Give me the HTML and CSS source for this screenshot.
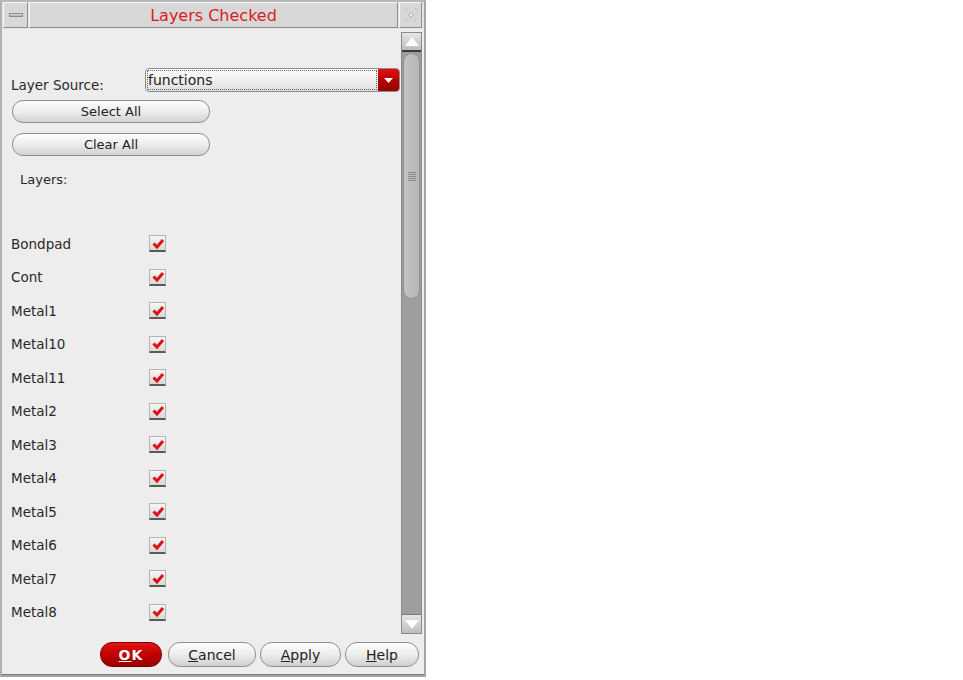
FILE: index.html
```html
<!DOCTYPE html>
<html>
<head>
<meta charset="utf-8">
<link rel="stylesheet" href="styles.css">
</head>
<body>
<div class="window">
  <div class="titlebar">
    <div class="tb-cell tb-min"><span class="min-bar"></span></div>
    <div class="tb-cell tb-title">Layers Checked</div>
    <div class="tb-cell tb-close">
      <svg width="16" height="16" viewBox="0 0 16 16"><path d="M2 2 L14 14 M14 2 L2 14" stroke="#b4b4b4" stroke-width="2.6" stroke-dasharray="3 1.5" fill="none"/><path d="M2 2 L14 14 M14 2 L2 14" stroke="#f4f4f4" stroke-width="1" fill="none"/></svg>
    </div>
  </div>
  <div class="main">
    <div class="pane">
      <div class="source-row">
        <span class="label">Layer Source:</span>
        <div class="combo">
          <div class="combo-field"><span class="combo-text">functions</span></div>
          <div class="combo-btn"><svg width="9" height="5" viewBox="0 0 9 5"><path d="M0 0 H9 L4.5 5 Z" fill="#fff"/></svg></div>
        </div>
      </div>
      <button class="pill first">Select All</button>
      <button class="pill second">Clear All</button>
      <div class="layers-label">Layers:</div>
      <div class="rows">
        <div class="row"><span>Bondpad</span><span class="cb"><svg width="14" height="13" viewBox="0 0 14 13"><path d="M2.5 6.5 L6 10 L12 3" stroke="#e0101a" stroke-width="3" fill="none"/></svg></span></div>
        <div class="row"><span>Cont</span><span class="cb"><svg width="14" height="13" viewBox="0 0 14 13"><path d="M2.5 6.5 L6 10 L12 3" stroke="#e0101a" stroke-width="3" fill="none"/></svg></span></div>
        <div class="row"><span>Metal1</span><span class="cb"><svg width="14" height="13" viewBox="0 0 14 13"><path d="M2.5 6.5 L6 10 L12 3" stroke="#e0101a" stroke-width="3" fill="none"/></svg></span></div>
        <div class="row"><span>Metal10</span><span class="cb"><svg width="14" height="13" viewBox="0 0 14 13"><path d="M2.5 6.5 L6 10 L12 3" stroke="#e0101a" stroke-width="3" fill="none"/></svg></span></div>
        <div class="row"><span>Metal11</span><span class="cb"><svg width="14" height="13" viewBox="0 0 14 13"><path d="M2.5 6.5 L6 10 L12 3" stroke="#e0101a" stroke-width="3" fill="none"/></svg></span></div>
        <div class="row"><span>Metal2</span><span class="cb"><svg width="14" height="13" viewBox="0 0 14 13"><path d="M2.5 6.5 L6 10 L12 3" stroke="#e0101a" stroke-width="3" fill="none"/></svg></span></div>
        <div class="row"><span>Metal3</span><span class="cb"><svg width="14" height="13" viewBox="0 0 14 13"><path d="M2.5 6.5 L6 10 L12 3" stroke="#e0101a" stroke-width="3" fill="none"/></svg></span></div>
        <div class="row"><span>Metal4</span><span class="cb"><svg width="14" height="13" viewBox="0 0 14 13"><path d="M2.5 6.5 L6 10 L12 3" stroke="#e0101a" stroke-width="3" fill="none"/></svg></span></div>
        <div class="row"><span>Metal5</span><span class="cb"><svg width="14" height="13" viewBox="0 0 14 13"><path d="M2.5 6.5 L6 10 L12 3" stroke="#e0101a" stroke-width="3" fill="none"/></svg></span></div>
        <div class="row"><span>Metal6</span><span class="cb"><svg width="14" height="13" viewBox="0 0 14 13"><path d="M2.5 6.5 L6 10 L12 3" stroke="#e0101a" stroke-width="3" fill="none"/></svg></span></div>
        <div class="row"><span>Metal7</span><span class="cb"><svg width="14" height="13" viewBox="0 0 14 13"><path d="M2.5 6.5 L6 10 L12 3" stroke="#e0101a" stroke-width="3" fill="none"/></svg></span></div>
        <div class="row"><span>Metal8</span><span class="cb"><svg width="14" height="13" viewBox="0 0 14 13"><path d="M2.5 6.5 L6 10 L12 3" stroke="#e0101a" stroke-width="3" fill="none"/></svg></span></div>
      </div>
    </div>
    <div class="scrollbar">
      <div class="sb-btn sb-up"><svg width="14" height="9" viewBox="0 0 14 9"><path d="M0 9 L7 0 L14 9 Z" fill="#fdfdfd"/></svg></div>
      <div class="sb-track">
        <div class="sb-thumb"><span class="grip"></span></div>
      </div>
      <div class="sb-btn sb-down"><svg width="14" height="9" viewBox="0 0 14 9"><path d="M0 0 L7 9 L14 0 Z" fill="#fdfdfd"/></svg></div>
    </div>
  </div>
  <div class="footer">
    <button class="fbtn ok"><u>O</u>K</button>
    <button class="fbtn cancel"><u>C</u>ancel</button>
    <button class="fbtn apply"><u>A</u>pply</button>
    <button class="fbtn help"><u>H</u>elp</button>
  </div>
</div>
</body>
</html>
```

FILE: styles.css
```css
* { box-sizing: border-box; }
html, body { margin: 0; padding: 0; background: #ffffff; }
body { font-family: "DejaVu Sans", sans-serif; font-size: 13px; color: #2a2a2a; }

.window {
  width: 426px;
  height: 677px;
  border: 2px solid #a4a4a4;
  border-top-color: #b8b8b8;
  border-left-color: #b0b0b0;
  background: #ededed;
  display: flex;
  flex-direction: column;
}

.titlebar {
  height: 27px;
  display: flex;
  gap: 1px;
  padding: 0 2px 1px 1px;
  background: #e4e4e4;
}
.tb-cell {
  border: 1px solid;
  border-color: #f6f6f6 #8e8e8e #8e8e8e #f6f6f6;
  background: #d8d8d8;
  display: flex;
  align-items: center;
  justify-content: center;
}
.tb-min { width: 25px; }
.min-bar {
  width: 14px;
  height: 4px;
  border: 1px solid #8a8a8a;
  background: linear-gradient(#e8e8e8, #a8a8a8);
}
.tb-title {
  flex: 1;
  color: #da1b1f;
  font-size: 16px;
  padding-top: 1px;
}
.tb-close { width: 23px; }

.main {
  flex: 1;
  display: flex;
  min-height: 0;
}
.pane {
  flex: 1;
  padding: 39px 1px 0 9px;
  overflow: hidden;
}
.source-row {
  display: flex;
  align-items: center;
  height: 24px;
}
.source-row .label {
  width: 134px;
  font-size: 13.5px;
  padding-top: 10px;
}
.combo {
  flex: 1;
  height: 24px;
  display: flex;
  border: 1px solid #8c8c8c;
  border-radius: 4px;
  overflow: hidden;
}
.combo-field {
  flex: 1;
  background: linear-gradient(#fbfbfb, #f0f0f0 50%, #dedede);
  padding: 1px;
}
.combo-text {
  display: block;
  height: 100%;
  border: 1px dotted #666;
  font-size: 14px;
  line-height: 18px;
  padding-left: 0;
  color: #222;
}
.combo-btn {
  width: 21px;
  background: linear-gradient(#e01010, #b00000 60%, #950000);
  display: flex;
  align-items: center;
  justify-content: center;
}

.pill {
  display: block;
  width: 198px;
  height: 23px;
  margin-left: 1px;
  border: 1px solid #8e8e8e;
  border-radius: 11px;
  background: linear-gradient(#fdfdfd, #ededed 50%, #d2d2d2);
  font-family: "DejaVu Sans", sans-serif;
  font-size: 13px;
  color: #222;
  padding: 0;
}
.pill.first { margin-top: 8px; }
.pill.second { margin-top: 10px; }

.layers-label {
  margin-top: 16px;
  height: 16px;
  line-height: 16px;
  padding-left: 9px;
}

.rows { margin-top: 39px; }
.row {
  height: 33.5px;
  display: grid;
  grid-template-columns: 138px 16px;
  align-items: center;
  font-size: 13.5px;
}
.cb {
  width: 17px;
  height: 17px;
  border: 1px solid #b4b4b4;
  border-bottom: 2px solid #5a5a5a;
  background: linear-gradient(#f6f6f6, #d8d8d8);
  display: flex;
  align-items: center;
  justify-content: center;
}

.scrollbar {
  width: 21px;
  margin: 3px 2px 3px 0;
  display: flex;
  flex-direction: column;
  border: 1px solid #8a8a8a;
  background: #9e9e9e;
}
.sb-btn {
  height: 19px;
  background: linear-gradient(#e6e6e6, #bdbdbd);
  display: flex;
  align-items: center;
  justify-content: center;
}
.sb-up { border-bottom: 2px solid #3a3a3a; }
.sb-down { border-top: 1px solid #7a7a7a; }
.sb-track {
  flex: 1;
  padding: 1px 1px 0;
}
.sb-thumb {
  height: 246px;
  border: 1px solid #8f8f8f;
  border-radius: 9px;
  background: linear-gradient(90deg, #c4c4c4, #b6b6b6);
  display: flex;
  align-items: center;
  justify-content: center;
}
.grip {
  width: 8px;
  height: 9px;
  background: repeating-linear-gradient(#8a8a8a 0 1px, transparent 1px 2px);
}

.footer {
  height: 38px;
  display: flex;
  justify-content: flex-end;
  align-items: center;
  gap: 4px;
  padding: 0 5px 2px 0;
  border-bottom: 1px solid #7a7a7a;
}
.fbtn {
  height: 25px;
  border: 1px solid #8e8e8e;
  border-radius: 12px;
  background: linear-gradient(#fdfdfd, #ededed 50%, #d0d0d0);
  font-family: "DejaVu Sans", sans-serif;
  font-size: 14px;
  color: #222;
  padding: 0;
}
.fbtn.ok {
  width: 62px;
  margin-right: 2px;
  background: linear-gradient(#e41414, #c00000 50%, #980000);
  border-color: #7a0000;
  color: #fff;
  font-weight: bold;
  letter-spacing: 1px;
}
.fbtn.cancel { width: 88px; }
.fbtn.apply { width: 81px; }
.fbtn.help { width: 74px; }
```
